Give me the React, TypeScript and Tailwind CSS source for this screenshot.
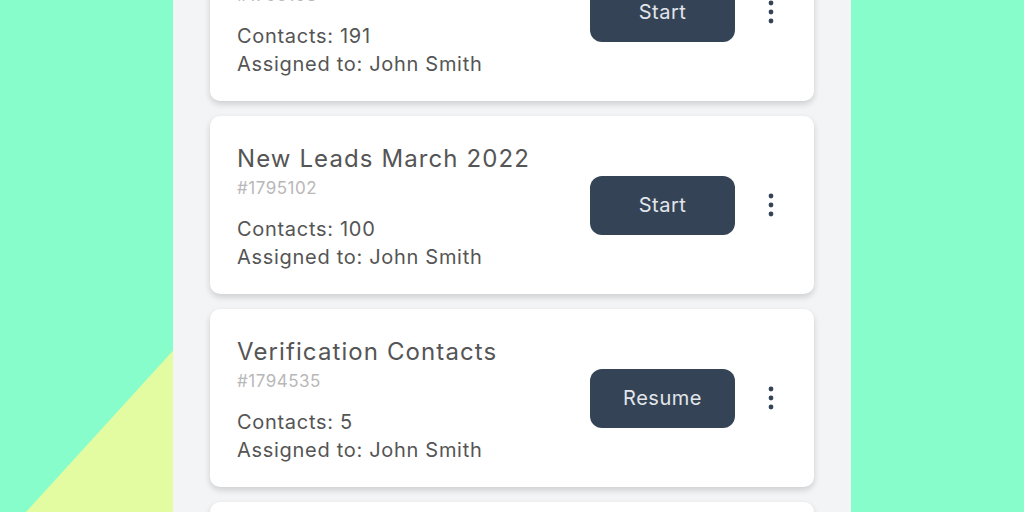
const campaigns = [
  {title: "Old Leads", id: "#1795103", contacts: 191, action: "Start"},
  {title: "New Leads March 2022", id: "#1795102", contacts: 100, action: "Start"},
  {title: "Verification Contacts", id: "#1794535", contacts: 5, action: "Resume"},
  {title: "Follow Up", id: "#1794210", contacts: 42, action: "Start"},
]

const Dots = () => (
  <svg width="6" height="24" viewBox="0 0 6 24" className="text-[#344456]">
    <circle cx="3" cy="3" r="2.4" fill="currentColor"/>
    <circle cx="3" cy="12" r="2.4" fill="currentColor"/>
    <circle cx="3" cy="21" r="2.4" fill="currentColor"/>
  </svg>
)

export default () => {
  return (
    <div className="relative h-[512px] w-[1024px] overflow-hidden bg-[#88fdcc] font-['Inter',sans-serif]">
      <svg className="absolute inset-0" width="1024" height="512">
        <polygon points="26,512 200,321 200,512" fill="#e4fca1"/>
      </svg>
      <div className="relative ml-[173px] flex h-full w-[678px] flex-col gap-[15px] bg-[#f3f4f6] px-[37px]">
        {campaigns.map((c, i) => (
          <div
            key={c.id}
            className={`flex h-[178px] shrink-0 items-center justify-between rounded-[10px] bg-white pl-[27px] pr-[40px] shadow-[0_3px_6px_rgba(0,0,0,0.16)] ${i === 0 ? "mt-[-77px]" : ""}`}
          >
            <div className="mt-[4px] flex flex-col text-[#555555]">
              <div className="text-[24px] leading-[32px] tracking-[1.1px]">{c.title}</div>
              <div className="text-[17px] leading-[26px] tracking-[0.5px] text-[#b8b8b8]">{c.id}</div>
              <div className="mt-[14px] text-[20px] leading-[28px] tracking-[0.7px]">Contacts: {c.contacts}</div>
              <div className="text-[20px] leading-[28px] tracking-[0.7px]">Assigned to: John Smith</div>
            </div>
            <div className="flex items-center gap-[33px]">
              <button className="h-[59px] w-[145px] rounded-[12px] bg-[#344456] text-[20px] tracking-[0.5px] text-[#e2e6eb]">
                {c.action}
              </button>
              <Dots/>
            </div>
          </div>
        ))}
      </div>
    </div>
  )
}
